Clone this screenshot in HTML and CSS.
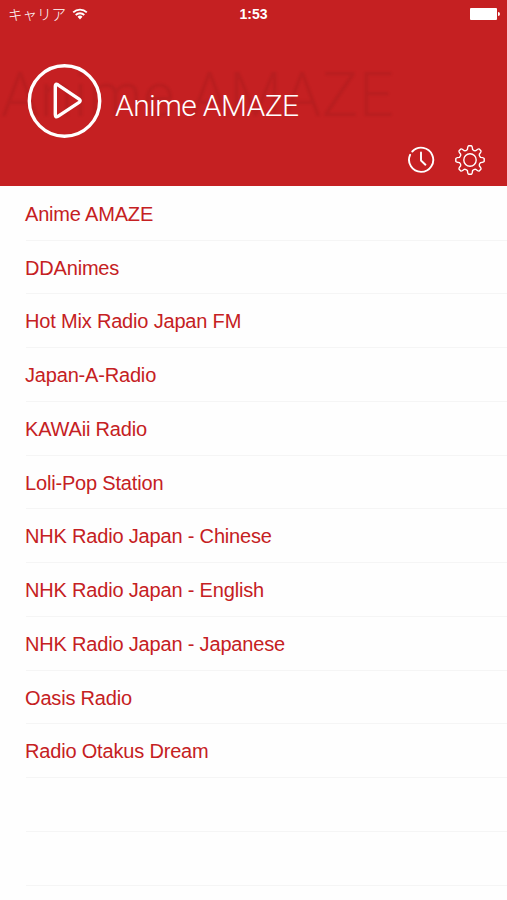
FILE: index.html
```html
<!DOCTYPE html>
<html lang="ja">
<head>
<meta charset="utf-8">
<title>Anime AMAZE</title>
<link rel="stylesheet" href="styles.css">
</head>
<body>
<header>
  <div class="status">
    <div class="carrier">
      <span>キャリア</span>
      <svg class="wifi" width="16" height="12" viewBox="0 0 16 12">
        <path d="M1.2 4.4a9.6 9.6 0 0 1 13.6 0M3.7 7a6.1 6.1 0 0 1 8.6 0"/>
        <path class="dot" d="M5.5 8.8a3.6 3.6 0 0 1 5 0L8 11.5z"/>
      </svg>
    </div>
    <div class="time">1:53</div>
    <div class="battery"></div>
  </div>
  <div class="ghost">Anime AMAZE</div>
  <div class="player">
    <svg class="play" width="76" height="76" viewBox="0 0 76 76">
      <circle cx="38.5" cy="38" r="35.2"/>
      <path d="M29.3 23v28.8q0 3 2.6 1.5l21.2-13.9q2.2-1.6 0-3.2l-21.2-14.4q-2.6-1.6-2.6 1.2z"/>
    </svg>
    <h1>Anime AMAZE</h1>
  </div>
  <div class="tools">
    <svg class="clock" width="28" height="28" viewBox="0 0 28 28">
      <path d="M5.3 5.5A12.1 12.1 0 1 1 3.1 8.8M14 6.5v8l4.4 4.2"/>
    </svg>
    <svg class="gear" width="32" height="32" viewBox="-16 -16 32 32">
      <circle r="6.2"/>
      <path d="M-2.6-10.6Q-2.2-14.2-1.2-14.2H1.2Q2.2-14.2 2.6-10.6Q4.5-8.8 5.7-9.3Q8.5-11.6 9.2-10.9L10.9-9.2Q11.6-8.5 9.3-5.7Q8.8-4.5 10.6-2.6Q14.2-2.2 14.2-1.2V1.2Q14.2 2.2 10.6 2.6Q8.8 4.5 9.3 5.7Q11.6 8.5 10.9 9.2L9.2 10.9Q8.5 11.6 5.7 9.3Q4.5 8.8 2.6 10.6Q2.2 14.2 1.2 14.2H-1.2Q-2.2 14.2-2.6 10.6Q-4.5 8.8-5.7 9.3Q-8.5 11.6-9.2 10.9L-10.9 9.2Q-11.6 8.5-9.3 5.7Q-8.8 4.5-10.6 2.6Q-14.2 2.2-14.2 1.2V-1.2Q-14.2-2.2-10.6-2.6Q-8.8-4.5-9.3-5.7Q-11.6-8.5-10.9-9.2L-9.2-10.9Q-8.5-11.6-5.7-9.3Q-4.5-8.8-2.6-10.6z"/>
    </svg>
  </div>
</header>
<ul>
  <li>Anime AMAZE</li>
  <li>DDAnimes</li>
  <li>Hot Mix Radio Japan FM</li>
  <li>Japan-A-Radio</li>
  <li>KAWAii Radio</li>
  <li>Loli-Pop Station</li>
  <li>NHK Radio Japan - Chinese</li>
  <li>NHK Radio Japan - English</li>
  <li>NHK Radio Japan - Japanese</li>
  <li>Oasis Radio</li>
  <li>Radio Otakus Dream</li>
  <li></li>
  <li></li>
  <li></li>
</ul>
</body>
</html>
```

FILE: styles.css
```css
body {
  margin: 0;
  height: 900px;
  overflow: hidden;
  background: #fefefe;
  font-family: "Liberation Sans", "Noto Sans CJK JP", sans-serif;
}
header {
  position: relative;
  height: 186.4px;
  background: #c52022;
  color: white;
}
svg {
  fill: none;
  stroke: white;
  stroke-linecap: round;
  stroke-linejoin: round;
}
.status {
  display: grid;
  grid-template-columns: 1fr auto 1fr;
  align-items: center;
  height: 27px;
  padding: 0 8px;
}
.carrier {
  display: flex;
  align-items: center;
  gap: 6px;
  font: 300 14.5px "Noto Sans CJK JP", sans-serif;
  line-height: 25px;
}
.wifi {
  stroke-width: 1.8;
  stroke-linecap: butt;
}
.wifi .dot {
  fill: white;
  stroke: none;
}
.time {
  font-size: 14px;
  font-weight: bold;
}
.battery {
  position: relative;
  justify-self: end;
  width: 27px;
  height: 12px;
  margin-right: 2px;
  border-radius: 1px;
  background: white;
}
.battery::after {
  content: "";
  position: absolute;
  left: 28px;
  top: 4px;
  width: 2px;
  height: 4px;
  border-radius: 0 2px 2px 0;
  background: white;
}
/* faded station name behind the player */
.ghost {
  position: absolute;
  left: 1px;
  top: 59px;
  font: 300 61px/72px Roboto, sans-serif;
  letter-spacing: 0.6px;
  white-space: nowrap;
  color: rgba(100, 20, 20, 0.12);
  filter: blur(1px);
}
.player {
  position: relative;
  display: flex;
  padding: 36px 0 0 26px;
}
.play {
  stroke-width: 3.4;
}
h1 {
  margin: 25px 0 0 13px;
  font: 300 30px/36px Roboto, sans-serif;
  letter-spacing: -0.6px;
  white-space: nowrap;
}
.tools {
  display: flex;
  justify-content: flex-end;
  align-items: center;
  gap: 19px;
  height: 32px;
  margin-top: 5px;
  padding-right: 21px;
}
.clock {
  stroke-width: 1.9;
}
.gear {
  stroke-width: 1.4;
}
ul {
  margin: 0;
  padding: 0.6px 0 0 26px;
  list-style: none;
}
li {
  box-sizing: border-box;
  height: 53.76px;
  border-bottom: 1px solid #f5f5f5;
  color: #c52022;
  font-size: 20px;
  line-height: 54px;
  letter-spacing: -0.18px;
  text-indent: -1px;
  white-space: nowrap;
}
```
